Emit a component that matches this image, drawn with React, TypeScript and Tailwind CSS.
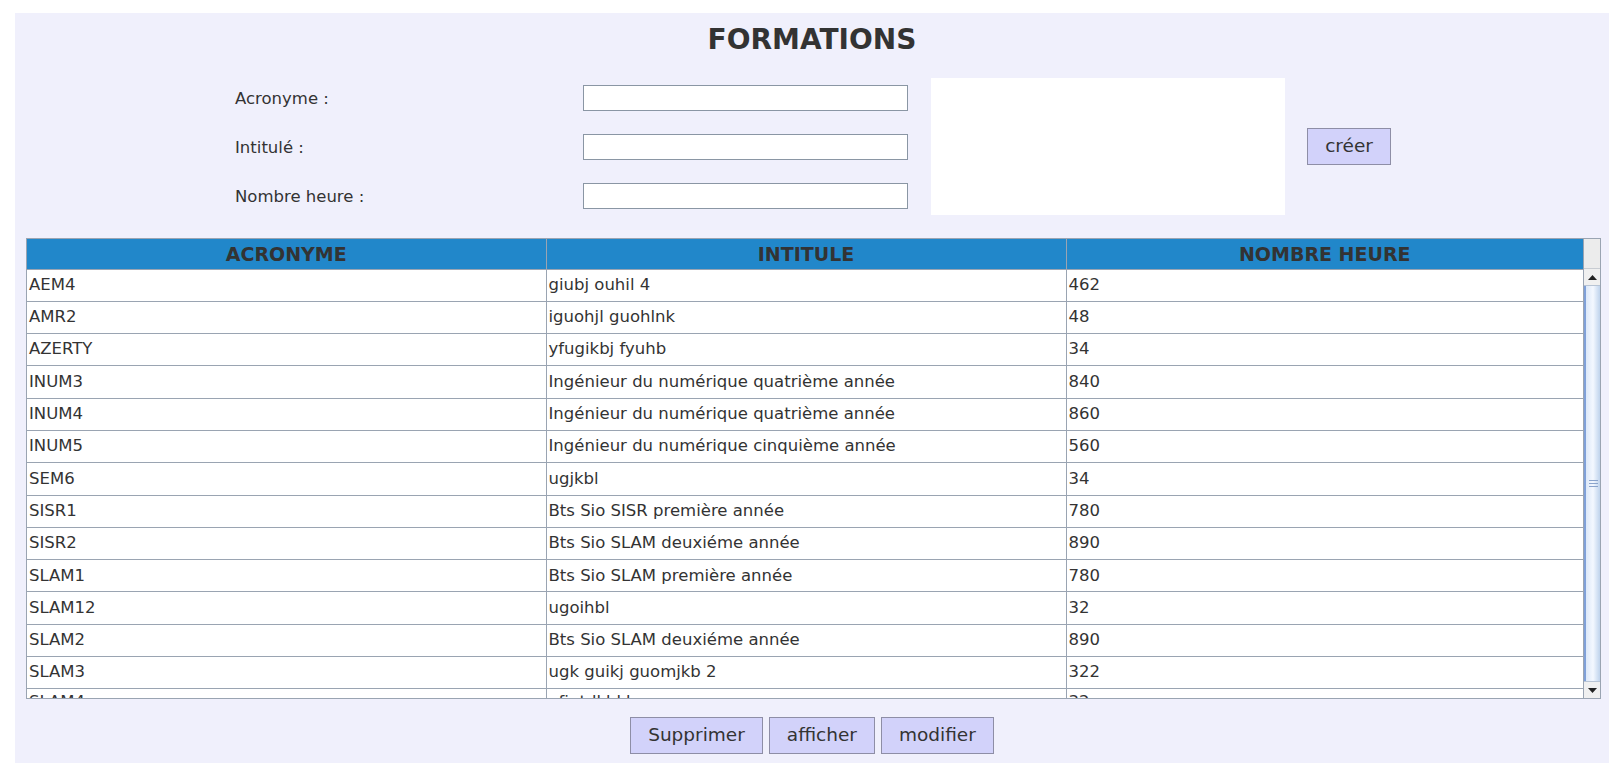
import React from 'react';

const rows = [
  ['AEM4', 'giubj ouhil 4', '462'],
  ['AMR2', 'iguohjl guohlnk', '48'],
  ['AZERTY', 'yfugikbj fyuhb', '34'],
  ['INUM3', 'Ingénieur du numérique quatrième année', '840'],
  ['INUM4', 'Ingénieur du numérique quatrième année', '860'],
  ['INUM5', 'Ingénieur du numérique cinquième année', '560'],
  ['SEM6', 'ugjkbl', '34'],
  ['SISR1', 'Bts Sio SISR première année', '780'],
  ['SISR2', 'Bts Sio SLAM deuxiéme année', '890'],
  ['SLAM1', 'Bts Sio SLAM première année', '780'],
  ['SLAM12', 'ugoihbl', '32'],
  ['SLAM2', 'Bts Sio SLAM deuxiéme année', '890'],
  ['SLAM3', 'ugk guikj guomjkb 2', '322'],
  ['SLAM4', 'afiutdkbkb', '32'],
];

const fields = ['Acronyme :', 'Intitulé :', 'Nombre heure :'];

const btn =
  'h-[37px] border border-[#8e8ea6] bg-[#d2d2fa] text-[18.5px] text-[#333] px-[17px] leading-none';

const Scrollbar = () => (
  <div className="flex w-[17px] flex-col border-l border-[#9aa4b2] bg-[#ececec]">
    <div className="h-[30px] border-b border-[#c8ccd2]" />
    <div className="flex h-[17px] items-center justify-center border-b border-[#b8c4d4] bg-[#f0f0f0]">
      <svg width="9" height="5" viewBox="0 0 9 5">
        <path d="M0 5 L4.5 0 L9 5 Z" fill="#222" />
      </svg>
    </div>
    <div className="flex flex-1 items-center justify-center border-l-2 border-[#7fa0d8] bg-gradient-to-r from-[#dce8f8] via-[#f4f8ff] to-[#bfd3ec]">
      <div className="flex flex-col gap-[2px]">
        <div className="h-px w-[9px] bg-[#8aa4cc]" />
        <div className="h-px w-[9px] bg-[#8aa4cc]" />
        <div className="h-px w-[9px] bg-[#8aa4cc]" />
      </div>
    </div>
    <div className="flex h-[17px] items-center justify-center border-t border-[#b8c4d4] bg-[#f0f0f0]">
      <svg width="9" height="5" viewBox="0 0 9 5">
        <path d="M0 0 L4.5 5 L9 0 Z" fill="#222" />
      </svg>
    </div>
  </div>
);

export default function App() {
  return (
    <div className="min-h-screen bg-white pl-[15px] pt-[13px] font-['DejaVu_Sans',sans-serif] text-[#333]">
      <div className="flex h-[750px] w-[1594px] flex-col bg-[#f0f0fc]">
        <h1 className="pt-[10px] text-center text-[28px] font-bold leading-[34px] text-[#333]">
          FORMATIONS
        </h1>

        <div className="mt-[21px] flex items-center">
          <div className="ml-[220px] grid grid-cols-[348px_325px] gap-y-[23px] py-[6px]">
            {fields.map((label) => (
              <React.Fragment key={label}>
                <label className="flex h-[26px] items-center pt-[3px] text-[16.5px]">{label}</label>
                <input
                  type="text"
                  className="h-[26px] w-[325px] border border-[#8a96a4] bg-white outline-none"
                />
              </React.Fragment>
            ))}
          </div>
          <div className="ml-[23px] h-[137px] w-[354px] bg-white" />
          <button className={`${btn} ml-[22px] w-[84px] px-0`}>créer</button>
        </div>

        <div className="ml-[11px] mt-[23px] flex h-[461px] w-[1575px] border border-[#9aa4b2] bg-white">
          <div className="flex-1 overflow-hidden">
            <table className="w-full table-fixed border-collapse text-[16.5px]">
              <thead>
                <tr className="h-[30px] bg-[#2187ca]">
                  <th className="w-[519px] border border-[#9aa4b2] border-t-0 border-l-0 text-[19px] font-bold">ACRONYME</th>
                  <th className="w-[520px] border border-[#9aa4b2] border-t-0 text-[19px] font-bold">INTITULE</th>
                  <th className="border border-[#9aa4b2] border-t-0 border-r-0 text-[19px] font-bold">NOMBRE HEURE</th>
                </tr>
              </thead>
              <tbody>
                {rows.map((r, i) => {
                  const pad = i === rows.length - 1 ? 'pb-[5px]' : '';
                  return (
                    <tr key={r[0]} className="h-[32.3px]">
                      <td className={`border border-l-0 border-[#9aa4b2] px-[2px] leading-none ${pad}`}>{r[0]}</td>
                      <td className={`border border-[#9aa4b2] px-[2px] leading-none ${pad}`}>{r[1]}</td>
                      <td className={`border border-r-0 border-[#9aa4b2] px-[2px] leading-none ${pad}`}>{r[2]}</td>
                    </tr>
                  );
                })}
              </tbody>
            </table>
          </div>
          <Scrollbar />
        </div>

        <div className="mt-[18px] flex justify-center gap-[6px]">
          <button className={btn}>Supprimer</button>
          <button className={btn}>afficher</button>
          <button className={btn}>modifier</button>
        </div>
      </div>
    </div>
  );
}
